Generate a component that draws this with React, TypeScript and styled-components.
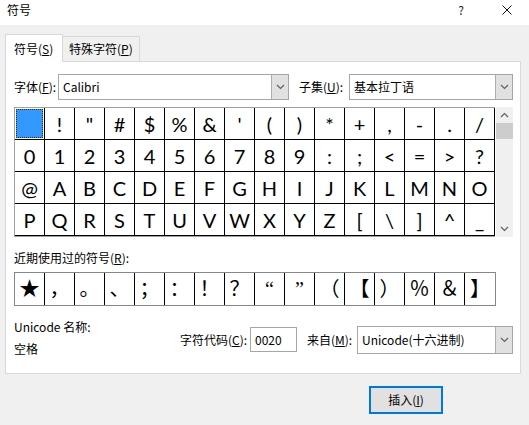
import React from "react";
import styled, { createGlobalStyle } from "styled-components";

const GlobalStyle = createGlobalStyle`
  html, body {
    margin: 0;
    padding: 0;
    background: #f0f0f0;
  }
  body {
    font-family: "Noto Sans CJK SC", "Noto Sans", sans-serif;
    font-size: 12px;
    line-height: 16px;
    color: #000;
  }
`;

const Window = styled.div`
  width: 529px;
  height: 425px;
  background: #f0f0f0;
  display: flex;
  flex-direction: column;
  overflow: hidden;
`;

const TitleBar = styled.div`
  height: 25px;
  flex-shrink: 0;
  background: #fff;
  display: flex;
  align-items: flex-start;
  padding: 2px 0 0 7px;
  box-sizing: border-box;
`;

const Title = styled.span`
  flex: 1;
`;

const HelpButton = styled.span`
  width: 20px;
  text-align: center;
  margin-right: 14px;
  color: #222;
`;

const CloseButton = styled.span`
  width: 44px;
  height: 16px;
  display: flex;
  align-items: center;
  justify-content: center;
`;

const Body = styled.div`
  padding: 9px 8px 0 5px;
  display: flex;
  flex-direction: column;
`;

const Tabs = styled.div`
  display: flex;
  align-items: flex-start;
  height: 28px;
  margin-bottom: -1px;
  position: relative;
  z-index: 1;
`;

const Tab = styled.div<{ $active?: boolean }>`
  box-sizing: border-box;
  border: 1px solid #d9d9d9;
  display: flex;
  align-items: center;
  ${({ $active }) =>
    $active
      ? `
    width: 58px;
    height: 28px;
    background: #fff;
    border-bottom: none;
    padding-left: 8px;
  `
      : `
    width: 77px;
    height: 25px;
    margin-top: 2px;
    background: #f0f0f0;
    border-left: none;
    border-bottom: none;
    padding-left: 6px;
  `}
`;

const Panel = styled.div`
  width: 516px;
  height: 313px;
  box-sizing: border-box;
  background: #fff;
  border: 1px solid #d9d9d9;
  padding: 12px 0 0 8px;
  display: flex;
  flex-direction: column;
`;

const FieldRow = styled.div`
  display: flex;
  align-items: center;
`;

const Label = styled.span<{ $width: number; $gap?: number }>`
  width: ${({ $width }) => $width}px;
  margin-left: ${({ $gap }) => $gap ?? 0}px;
  flex-shrink: 0;
  white-space: nowrap;
`;

const Combo = styled.div<{ $width: number; $height?: number }>`
  width: ${({ $width }) => $width}px;
  height: ${({ $height }) => $height ?? 26}px;
  box-sizing: border-box;
  border: 1px solid #a6a6a6;
  background: #fff;
  display: flex;
  align-items: stretch;
`;

const ComboText = styled.span`
  flex: 1;
  display: flex;
  align-items: center;
  padding-left: 4px;
`;

const ComboButton = styled.span`
  width: 16px;
  background: #e1e1e1;
  border-left: 1px solid #adadad;
  display: flex;
  align-items: center;
  justify-content: center;
`;

const GridArea = styled.div`
  display: flex;
  margin-top: 7px;
`;

const CharGrid = styled.div`
  display: grid;
  grid-template-columns: repeat(16, 30px);
  grid-auto-rows: 32px;
  border-left: 1px solid #a0a0a0;
  border-top: 1px solid #a0a0a0;
  border-bottom: 1px solid #a0a0a0;
`;

const Cell = styled.div`
  box-sizing: border-box;
  border-right: 1px solid #000;
  border-bottom: 1px solid #000;
  display: flex;
  padding: 1px;
`;

const Glyph = styled.span<{ $selected?: boolean }>`
  flex: 1;
  display: flex;
  align-items: center;
  justify-content: center;
  font-family: Lato, "Open Sans", sans-serif;
  font-size: 20px;
  line-height: 1;
  ${({ $selected }) =>
    $selected &&
    `
    background: #3399ff;
    border: 1px dotted #3a2a10;
  `}
`;

const Scrollbar = styled.div`
  width: 17px;
  margin-left: 1px;
  background: #f0f0f0;
  display: flex;
  flex-direction: column;
`;

const ScrollArrow = styled.span`
  height: 16px;
  display: flex;
  align-items: center;
  justify-content: center;
`;

const ScrollThumb = styled.span`
  height: 16px;
  background: #cdcdcd;
`;

const ScrollTrack = styled.span`
  flex: 1;
`;

const SectionLabel = styled.div`
  margin-top: 13px;
`;

const RecentRow = styled.div`
  display: grid;
  grid-template-columns: repeat(16, 30px);
  height: 34px;
  width: 482px;
  box-sizing: border-box;
  border: 1px solid #828790;
  margin-top: 6px;
`;

const RecentCell = styled.div`
  border-right: 1px solid #000;
  display: flex;
  align-items: center;
  justify-content: center;
  font-family: "Liberation Serif", "Noto Sans CJK SC", serif;
  font-size: 20px;
  line-height: 1;

  &:last-child {
    border-right: none;
  }
`;

const InfoRow = styled.div`
  display: flex;
  align-items: flex-start;
  margin-top: 13px;
`;

const InfoColumn = styled.div`
  width: 166px;
  display: flex;
  flex-direction: column;
  gap: 6px;
`;

const CodeGroup = styled.div<{ $offset: number }>`
  display: flex;
  align-items: center;
  margin-top: ${({ $offset }) => $offset}px;
`;

const CodeInput = styled.div`
  width: 47px;
  height: 25px;
  box-sizing: border-box;
  border: 1px solid #a6a6a6;
  padding-left: 4px;
  display: flex;
  align-items: center;
`;

const Footer = styled.div`
  display: flex;
  padding: 12px 0 0 364px;
`;

const InsertButton = styled.div`
  width: 74px;
  height: 28px;
  box-sizing: border-box;
  border: 2px solid #0078d7;
  background: #e1e1e1;
  display: flex;
  align-items: center;
  justify-content: center;
`;

const Chevron = ({ up = false }: { up?: boolean }) => (
  <svg width="9" height="6" viewBox="0 0 9 6">
    <polyline
      points={up ? "1,5 4.5,1.5 8,5" : "1,1 4.5,4.5 8,1"}
      fill="none"
      stroke="#606060"
      strokeWidth="1.2"
    />
  </svg>
);

const rows = [
  [" ", "!", '"', "#", "$", "%", "&", "'", "(", ")", "*", "+", ",", "-", ".", "/"],
  ["0", "1", "2", "3", "4", "5", "6", "7", "8", "9", ":", ";", "<", "=", ">", "?"],
  ["@", "A", "B", "C", "D", "E", "F", "G", "H", "I", "J", "K", "L", "M", "N", "O"],
  ["P", "Q", "R", "S", "T", "U", "V", "W", "X", "Y", "Z", "[", "\\", "]", "^", "_"],
];

const recent = ["★", "，", "。", "、", "；", "：", "！", "？", "“", "”", "（", "【", "）", "％", "＆", "】"];

const App = () => {
  return (
    <Window>
      <GlobalStyle />
      <TitleBar>
        <Title>符号</Title>
        <HelpButton>?</HelpButton>
        <CloseButton>
          <svg width="10" height="10" viewBox="0 0 10 10">
            <path d="M0.5 0.5 L9.5 9.5 M9.5 0.5 L0.5 9.5" stroke="#111" strokeWidth="1" />
          </svg>
        </CloseButton>
      </TitleBar>
      <Body>
        <Tabs>
          <Tab $active>
            符号(<u>S</u>)
          </Tab>
          <Tab>
            特殊字符(<u>P</u>)
          </Tab>
        </Tabs>
        <Panel>
          <FieldRow>
            <Label $width={44}>
              字体(<u>F</u>):
            </Label>
            <Combo $width={231}>
              <ComboText>Calibri</ComboText>
              <ComboButton>
                <Chevron />
              </ComboButton>
            </Combo>
            <Label $width={50} $gap={10}>
              子集(<u>U</u>):
            </Label>
            <Combo $width={164}>
              <ComboText>基本拉丁语</ComboText>
              <ComboButton>
                <Chevron />
              </ComboButton>
            </Combo>
          </FieldRow>

          <GridArea>
            <CharGrid>
              {rows.flat().map((ch, i) => (
                <Cell key={i}>
                  <Glyph $selected={i === 0}>{ch}</Glyph>
                </Cell>
              ))}
            </CharGrid>
            <Scrollbar>
              <ScrollArrow>
                <Chevron up />
              </ScrollArrow>
              <ScrollThumb />
              <ScrollTrack />
              <ScrollArrow>
                <Chevron />
              </ScrollArrow>
            </Scrollbar>
          </GridArea>

          <SectionLabel>
            近期使用过的符号(<u>R</u>):
          </SectionLabel>
          <RecentRow>
            {recent.map((ch, i) => (
              <RecentCell key={i}>{ch}</RecentCell>
            ))}
          </RecentRow>

          <InfoRow>
            <InfoColumn>
              <span>Unicode 名称:</span>
              <span>空格</span>
            </InfoColumn>
            <CodeGroup $offset={8}>
              <Label $width={70}>
                字符代码(<u>C</u>):
              </Label>
              <CodeInput>0020</CodeInput>
            </CodeGroup>
            <CodeGroup $offset={7}>
              <Label $width={50} $gap={10}>
                来自(<u>M</u>):
              </Label>
              <Combo $width={156} $height={28}>
                <ComboText>Unicode(十六进制)</ComboText>
                <ComboButton>
                  <Chevron />
                </ComboButton>
              </Combo>
            </CodeGroup>
          </InfoRow>
        </Panel>
        <Footer>
          <InsertButton>
            插入(<u>I</u>)
          </InsertButton>
        </Footer>
      </Body>
    </Window>
  );
};

export default App;
